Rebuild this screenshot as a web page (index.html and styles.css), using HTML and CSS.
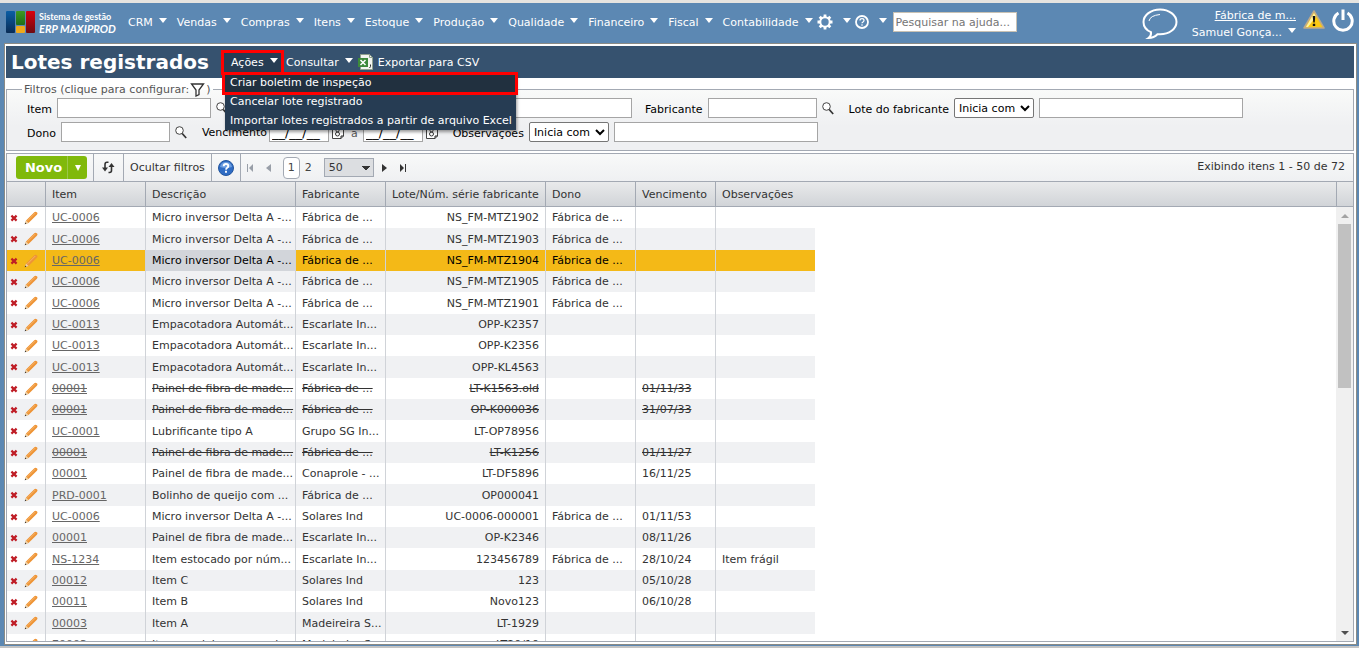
FILE: index.html
```html
<!DOCTYPE html>
<html lang="pt-BR">
  <head>
    <meta charset="UTF-8" />
    <meta name="viewport" content="width=device-width, initial-scale=1.0" />
    <title>Lotes registrados</title>
    <link rel="stylesheet" href="styles.css">
  </head>
  <body>
    <svg class="sprite" aria-hidden="true">
      <symbol id="x" viewBox="0 0 8 8">
        <path d="M1.4 1.6 6.6 6.6M6.6 1.6 1.4 6.6" stroke="#bf1d26" stroke-width="2.2" />
      </symbol>
      <symbol id="pencil" viewBox="0 0 14 14">
        <path d="M1 13 2 9.500 10.300 1.200Q11.500.2 12.800 1.300T12.900 3.800L4.500 12.100Z" fill="#ee9436" />
        <path d="M1 13 2 9.500 4.500 12.100Z" fill="#ecd3ab" />
        <path d="M.7 13.300 1.300 11.600 2.400 12.700Z" fill="#333" />
        <path d="M3.500 9.800 11.300 2" stroke="#f8b468" stroke-width="1" />
      </symbol>
      <symbol id="lens" viewBox="0 0 12 13">
        <circle cx="4.500" cy="4.500" r="3.800" fill="#fff" stroke="#444" />
        <path d="M7.200 7.500 11.200 12" stroke="#333" stroke-width="1.700" />
      </symbol>
      <symbol id="calendar" viewBox="0 0 12 13">
        <path d="M.5.5h11v9.500l-2.500 2.500H.5z" fill="#fff" stroke="#444" />
        <path d="M11.500 10H9v2.500" fill="none" stroke="#222" />
        <circle cx="5.500" cy="4.500" r="1.500" fill="none" stroke="#333" />
        <circle cx="5.500" cy="8" r="2" fill="none" stroke="#333" />
      </symbol>
    </svg>

    <header class="topbar">
      <a href="#" class="logo">
        <svg width="29" height="22" viewBox="0 0 29 22">
          <defs>
            <linearGradient id="blue" x2="0" y2="1"><stop stop-color="#0a5ea5" /><stop offset="1" stop-color="#0a2c55" /></linearGradient>
            <linearGradient id="green" x2="0" y2="1"><stop stop-color="#3d9a20" /><stop offset="1" stop-color="#1f6e18" /></linearGradient>
            <linearGradient id="red" x2="0" y2="1"><stop stop-color="#d8000e" /><stop offset="1" stop-color="#6e0c12" /></linearGradient>
          </defs>
          <rect width="9" height="22" rx="1" fill="url(#blue)" />
          <rect x="10" width="9" height="14" rx="1" fill="url(#green)" />
          <rect x="10" y="15" width="9" height="7" rx="1" fill="#efa91c" />
          <rect x="20" width="9" height="22" rx="1" fill="url(#red)" />
        </svg>
        <span class="logo-text">Sistema de gestão <em>ERP MAXIPROD</em></span>
      </a>
      <nav class="nav">
        <a href="#">CRM</a>
        <a href="#">Vendas</a>
        <a href="#">Compras</a>
        <a href="#">Itens</a>
        <a href="#">Estoque</a>
        <a href="#">Produção</a>
        <a href="#">Qualidade</a>
        <a href="#">Financeiro</a>
        <a href="#">Fiscal</a>
        <a href="#">Contabilidade</a>
        <a href="#" class="nav-icon" aria-label="Configurações">
          <svg width="16" height="16" viewBox="0 0 16 16" fill="none" stroke="#fff">
            <circle cx="8" cy="8" r="4.700" stroke-width="2" />
            <path d="M8 .5V3M8 13v2.500M.5 8H3M13 8h2.500M2.700 2.700l1.800 1.800M11.500 11.500l1.800 1.800M13.300 2.700l-1.800 1.800M4.500 11.500l-1.800 1.800" stroke-width="2.800" />
          </svg>
        </a>
        <a href="#" class="nav-icon" aria-label="Ajuda">
          <svg width="14" height="14" viewBox="0 0 14 14" fill="none" stroke="#fff">
            <circle cx="7" cy="7" r="6" stroke-width="1.800" />
            <path d="M5 5.500Q5 3.700 7 3.700T9 5.400Q9 6.300 8 6.900T7 8.300M7 9.300v1.400" stroke-width="1.200" />
          </svg>
        </a>
      </nav>
      <input type="text" class="help-search" placeholder="Pesquisar na ajuda..." aria-label="Pesquisar na ajuda">
      <div class="user-area">
        <svg class="chat" width="36" height="32" viewBox="0 0 36 32" fill="none" stroke="#fff" stroke-width="2">
          <path d="M9 24.200C4 22 1.500 18 1.500 14 1.500 7 9 1.500 18 1.500S34.500 7 34.500 14 27 26.300 18 26.300L15.500 26.200Q12 30 6.500 30 9.500 28 9 24.200Z" />
          <path d="M7 13Q8 7.500 18 6.500" stroke-width="1" />
        </svg>
        <div class="user">
          <a href="#" class="company">Fábrica de m...</a>
          <a href="#" class="user-name">Samuel Gonça...</a>
        </div>
        <svg width="22" height="19" viewBox="0 0 22 19">
          <path d="M11 1 21 18H1Z" fill="#fbc913" stroke="#bda98a" stroke-width="1.500" stroke-linejoin="round" />
          <path d="M11 3 13 6.500 5 17H3Z" fill="#fff2a0" />
          <path d="M9.700 6h2.600l-.6 6.500h-1.400zM9.800 13.800h2.400v2.300H9.800z" fill="#111" />
        </svg>
        <a href="#" class="power" aria-label="Sair">
          <svg width="22" height="23" viewBox="0 0 22 23" fill="none" stroke="#fff" stroke-width="3">
            <path d="M6.500 4A9.200 9.200 0 1 0 15.500 4M11 .5V11" />
          </svg>
        </a>
      </div>
    </header>

    <main class="frame">
      <div class="titlebar">
        <h1>Lotes registrados</h1>
        <div class="actions">
          <button type="button" class="action open">Ações</button>
          <ul class="menu">
            <li class="current"><a href="#">Criar boletim de inspeção</a></li>
            <li><a href="#">Cancelar lote registrado</a></li>
            <li><a href="#">Importar lotes registrados a partir de arquivo Excel</a></li>
          </ul>
        </div>
        <button type="button" class="action">Consultar</button>
        <button type="button" class="export">
          <svg width="16" height="16" viewBox="0 0 16 16">
            <path d="M2.500.5h9l3 3v12h-12z" fill="#f2f5ef" stroke="#8fa08d" />
            <path d="M11.500.5v3h3" fill="none" stroke="#8fa08d" />
            <rect y="4" width="10" height="9" fill="#3c8a3b" />
            <path d="M2.500 6 7.500 11M7.500 6 2.500 11" stroke="#fff" stroke-width="1.500" />
            <path d="M12.500 10.500v2l-1 1.500" fill="none" stroke="#333" />
          </svg>
          Exportar para CSV
        </button>
      </div>

      <fieldset class="filters">
        <legend>Filtros (clique para configurar:
          <svg width="15" height="14" viewBox="0 0 15 14"><path d="M1.500 1h12L9 7v4.500L6 13V7Z" fill="#fff" stroke="#333" stroke-width="1.300" /></svg>)
        </legend>
        <div class="filter-row">
          <label for="item">Item</label>
          <input type="text" id="item" class="medium">
          <svg class="lens" width="12" height="13"><use href="#lens" /></svg>
          <input type="text" class="wide description" aria-label="Descrição">
          <label for="fabricante">Fabricante</label>
          <input type="text" id="fabricante" class="short">
          <svg class="lens" width="12" height="13"><use href="#lens" /></svg>
          <label for="lote">Lote do fabricante</label>
          <select id="lote-op" aria-label="Condição do lote"><option>Inicia com</option></select>
          <input type="text" id="lote" class="wide">
        </div>
        <div class="filter-row">
          <label for="dono">Dono</label>
          <input type="text" id="dono" class="short">
          <svg class="lens" width="12" height="13"><use href="#lens" /></svg>
          <label for="de" class="date-label">Vencimento</label>
          <input type="text" id="de" class="date" value="__/__/__">
          <svg class="calendar" width="12" height="13"><use href="#calendar" /></svg>
          <label for="ate" class="until">a</label>
          <input type="text" id="ate" class="date" value="__/__/__">
          <svg class="calendar" width="12" height="13"><use href="#calendar" /></svg>
          <label for="obs">Observações</label>
          <select id="obs-op" aria-label="Condição das observações"><option>Inicia com</option></select>
          <input type="text" id="obs" class="wide">
        </div>
      </fieldset>

      <section class="grid">
        <div class="toolbar">
          <div class="tool tool-new">
            <button type="button" class="new">Novo</button><button type="button" class="new-more" aria-label="Mais opções"></button>
          </div>
          <div class="tool tool-refresh">
            <button type="button" class="plain" aria-label="Atualizar">
              <svg width="15" height="13" viewBox="0 0 15 13" fill="none" stroke="#333" stroke-width="1.600">
                <path d="M7.500 1.300H6Q4 1.300 4 3.500V9M10.500 4v5.500q0 2-2 2H7.500" />
                <path d="M1 6.500h6L4 10.500ZM7.500 6h6L10.500 2Z" fill="#333" stroke="none" />
              </svg>
            </button>
          </div>
          <div class="tool"><button type="button" class="plain">Ocultar filtros</button></div>
          <div class="tool">
            <button type="button" class="plain" aria-label="Ajuda">
              <svg width="16" height="16" viewBox="0 0 16 16" fill="none">
                <circle cx="8" cy="8" r="7.500" fill="#2f6cc4" stroke="#24569e" />
                <path d="M2 7Q3 2 8 2T14 7Q8 9 2 7Z" fill="#6c9de0" />
                <path d="M5.700 6.200Q5.700 4 8 4T10.300 6Q10.300 7 9.200 7.700T8 9.600M8 10.800V12.800" stroke="#fff" stroke-width="1.900" />
              </svg>
            </button>
          </div>
          <div class="pager">
            <button type="button" class="plain off" aria-label="Primeira"><svg width="7" height="8"><path d="M0 0h1v8H0zM6 0v8L2 4z" /></svg></button>
            <button type="button" class="plain off" aria-label="Anterior"><svg width="5" height="8"><path d="M5 0v8L0 4z" /></svg></button>
            <a href="#" class="page current">1</a>
            <a href="#" class="page">2</a>
            <select class="page-size" aria-label="Itens por página"><option>50</option></select>
            <button type="button" class="plain" aria-label="Próxima"><svg width="5" height="8"><path d="M0 0v8l5-4z" /></svg></button>
            <button type="button" class="plain" aria-label="Última"><svg width="7" height="8"><path d="M1 0v8l4-4zM6 0h1v8H6z" /></svg></button>
          </div>
          <span class="count">Exibindo itens 1 - 50 de 72</span>
        </div>

        <div class="grid-head">
          <table>
            <colgroup><col class="c-tools"><col class="c-item"><col class="c-desc"><col class="c-fab"><col class="c-lot"><col class="c-fab"><col class="c-date"><col></colgroup>
            <thead>
              <tr><th></th><th>Item</th><th>Descrição</th><th>Fabricante</th><th>Lote/Núm. série fabricante</th><th>Dono</th><th>Vencimento</th><th>Observações</th></tr>
            </thead>
          </table>
        </div>

        <div class="grid-body">
          <div class="rows">
            <table>
              <colgroup><col class="c-tools"><col class="c-item"><col class="c-desc"><col class="c-fab"><col class="c-lot"><col class="c-fab"><col class="c-date"><col class="c-item"></colgroup>
              <tbody>
                <tr><td><svg class="x"><use href="#x" /></svg><svg class="pencil"><use href="#pencil" /></svg></td><td><a href="#">UC-0006</a></td><td>Micro inversor Delta A -...</td><td>Fábrica de ...</td><td>NS_FM-MTZ1902</td><td>Fábrica de ...</td><td></td><td></td></tr>
                <tr><td><svg class="x"><use href="#x" /></svg><svg class="pencil"><use href="#pencil" /></svg></td><td><a href="#">UC-0006</a></td><td>Micro inversor Delta A -...</td><td>Fábrica de ...</td><td>NS_FM-MTZ1903</td><td>Fábrica de ...</td><td></td><td></td></tr>
                <tr class="selected"><td><svg class="x"><use href="#x" /></svg><svg class="pencil"><use href="#pencil" /></svg></td><td><a href="#">UC-0006</a></td><td class="hover">Micro inversor Delta A -...</td><td>Fábrica de ...</td><td>NS_FM-MTZ1904</td><td>Fábrica de ...</td><td></td><td></td></tr>
                <tr><td><svg class="x"><use href="#x" /></svg><svg class="pencil"><use href="#pencil" /></svg></td><td><a href="#">UC-0006</a></td><td>Micro inversor Delta A -...</td><td>Fábrica de ...</td><td>NS_FM-MTZ1905</td><td>Fábrica de ...</td><td></td><td></td></tr>
                <tr><td><svg class="x"><use href="#x" /></svg><svg class="pencil"><use href="#pencil" /></svg></td><td><a href="#">UC-0006</a></td><td>Micro inversor Delta A -...</td><td>Fábrica de ...</td><td>NS_FM-MTZ1901</td><td>Fábrica de ...</td><td></td><td></td></tr>
                <tr><td><svg class="x"><use href="#x" /></svg><svg class="pencil"><use href="#pencil" /></svg></td><td><a href="#">UC-0013</a></td><td>Empacotadora Automát...</td><td>Escarlate In...</td><td>OPP-K2357</td><td></td><td></td><td></td></tr>
                <tr><td><svg class="x"><use href="#x" /></svg><svg class="pencil"><use href="#pencil" /></svg></td><td><a href="#">UC-0013</a></td><td>Empacotadora Automát...</td><td>Escarlate In...</td><td>OPP-K2356</td><td></td><td></td><td></td></tr>
                <tr><td><svg class="x"><use href="#x" /></svg><svg class="pencil"><use href="#pencil" /></svg></td><td><a href="#">UC-0013</a></td><td>Empacotadora Automát...</td><td>Escarlate In...</td><td>OPP-KL4563</td><td></td><td></td><td></td></tr>
                <tr class="canceled"><td><svg class="x"><use href="#x" /></svg><svg class="pencil"><use href="#pencil" /></svg></td><td><a href="#">00001</a></td><td>Painel de fibra de made...</td><td>Fábrica de ...</td><td>LT-K1563.old</td><td></td><td>01/11/33</td><td></td></tr>
                <tr class="canceled"><td><svg class="x"><use href="#x" /></svg><svg class="pencil"><use href="#pencil" /></svg></td><td><a href="#">00001</a></td><td>Painel de fibra de made...</td><td>Fábrica de ...</td><td>OP-K000036</td><td></td><td>31/07/33</td><td></td></tr>
                <tr><td><svg class="x"><use href="#x" /></svg><svg class="pencil"><use href="#pencil" /></svg></td><td><a href="#">UC-0001</a></td><td>Lubrificante tipo A</td><td>Grupo SG In...</td><td>LT-OP78956</td><td></td><td></td><td></td></tr>
                <tr class="canceled"><td><svg class="x"><use href="#x" /></svg><svg class="pencil"><use href="#pencil" /></svg></td><td><a href="#">00001</a></td><td>Painel de fibra de made...</td><td>Fábrica de ...</td><td>LT-K1256</td><td></td><td>01/11/27</td><td></td></tr>
                <tr><td><svg class="x"><use href="#x" /></svg><svg class="pencil"><use href="#pencil" /></svg></td><td><a href="#">00001</a></td><td>Painel de fibra de made...</td><td>Conaprole - ...</td><td>LT-DF5896</td><td></td><td>16/11/25</td><td></td></tr>
                <tr><td><svg class="x"><use href="#x" /></svg><svg class="pencil"><use href="#pencil" /></svg></td><td><a href="#">PRD-0001</a></td><td>Bolinho de queijo com ...</td><td>Fábrica de ...</td><td>OP000041</td><td></td><td></td><td></td></tr>
                <tr><td><svg class="x"><use href="#x" /></svg><svg class="pencil"><use href="#pencil" /></svg></td><td><a href="#">UC-0006</a></td><td>Micro inversor Delta A -...</td><td>Solares Ind</td><td>UC-0006-000001</td><td>Fábrica de ...</td><td>01/11/53</td><td></td></tr>
                <tr><td><svg class="x"><use href="#x" /></svg><svg class="pencil"><use href="#pencil" /></svg></td><td><a href="#">00001</a></td><td>Painel de fibra de made...</td><td>Escarlate In...</td><td>OP-K2346</td><td></td><td>08/11/26</td><td></td></tr>
                <tr><td><svg class="x"><use href="#x" /></svg><svg class="pencil"><use href="#pencil" /></svg></td><td><a href="#">NS-1234</a></td><td>Item estocado por núm...</td><td>Escarlate In...</td><td>123456789</td><td>Fábrica de ...</td><td>28/10/24</td><td>Item frágil</td></tr>
                <tr><td><svg class="x"><use href="#x" /></svg><svg class="pencil"><use href="#pencil" /></svg></td><td><a href="#">00012</a></td><td>Item C</td><td>Solares Ind</td><td>123</td><td></td><td>05/10/28</td><td></td></tr>
                <tr><td><svg class="x"><use href="#x" /></svg><svg class="pencil"><use href="#pencil" /></svg></td><td><a href="#">00011</a></td><td>Item B</td><td>Solares Ind</td><td>Novo123</td><td></td><td>06/10/28</td><td></td></tr>
                <tr><td><svg class="x"><use href="#x" /></svg><svg class="pencil"><use href="#pencil" /></svg></td><td><a href="#">00003</a></td><td>Item A</td><td>Madeireira S...</td><td>LT-1929</td><td></td><td></td><td></td></tr>
                <tr><td><svg class="x"><use href="#x" /></svg><svg class="pencil"><use href="#pencil" /></svg></td><td><a href="#">70003</a></td><td>Item madeira comprad...</td><td>Madeireira S...</td><td>LT20/10</td><td></td><td></td><td></td></tr>
              </tbody>
            </table>
          </div>
          <div class="scrollbar">
            <div class="arrow-up"></div>
            <div class="thumb"></div>
            <div class="arrow-down"></div>
          </div>
        </div>
      </section>
    </main>
  </body>
</html>
```

FILE: styles.css
```css
* {
  margin: 0;
  padding: 0;
  box-sizing: border-box;
}

body {
  height: 100vh;
  display: flex;
  flex-direction: column;
  overflow: hidden;
  padding: 0 2px 0 4px;
  background: #5c88b3;
  border-top: 3px solid #e6e4e0;
  border-bottom: 2px solid #c4c4c4;
  font-family: "DejaVu Sans", Verdana, sans-serif;
  font-size: 11px;
  color: #333;
}

input,
select,
button {
  font: inherit;
  color: inherit;
}

button {
  border: 0;
  background: none;
}

a {
  color: inherit;
}

.sprite {
  position: absolute;
  width: 0;
  height: 0;
}

/* Top bar */
.topbar {
  display: flex;
  height: 40px;
  flex: none;
  color: #fff;
}

.topbar a {
  text-decoration: none;
}

.logo {
  display: flex;
  gap: 4px;
  width: 124px;
  padding: 8px 0 0 2px;
}

.logo-text {
  font: bold 9px/11px Lato, sans-serif;
  white-space: nowrap;
}

.logo-text em {
  display: block;
  font-size: 11px;
  line-height: 13px;
}

.nav {
  display: flex;
  align-items: center;
  gap: 10px;
  height: 38px;
}

.nav a,
.action,
.user-name {
  display: flex;
  align-items: center;
  gap: 6px;
}

.nav a::after,
.action::after,
.user-name::after {
  content: "";
  margin-bottom: 4px;
  border: 4px solid transparent;
  border-top: 5px solid #fff;
  border-bottom: 0;
}

.nav .nav-icon {
  gap: 10px;
  margin-left: -6px;
}

.help-search {
  width: 124px;
  height: 20px;
  margin: 9px 0 0 6px;
  padding: 0 2px;
  border: 1px solid #c9c2b4;
  background: #fff;
}

.help-search::placeholder {
  color: #757575;
}

.user-area {
  display: flex;
  align-items: flex-start;
  gap: 7px;
  margin-left: auto;
  padding: 7px 3px 0 0;
}

.chat {
  margin-right: 7px;
  margin-top: -2px;
}

.user {
  line-height: 17px;
  text-align: right;
  margin-top: -3px;
}

.topbar .company {
  text-decoration: underline;
}

.power {
  margin-top: -1px;
}

/* White frame around the page content */
.frame {
  flex: 1;
  min-height: 0;
  display: flex;
  flex-direction: column;
  padding: 2px 2px 2px 1px;
  margin-bottom: 1px;
  border: 1px solid #8b8b86;
  background: #fff;
}

.titlebar {
  display: flex;
  align-items: center;
  flex: none;
  height: 32px;
  padding-left: 5px;
  background: #36526f;
  color: #fff;
}

.titlebar h1 {
  width: 213px;
  font-size: 20px;
  white-space: nowrap;
}

.actions {
  position: relative;
  margin-right: 2px;
}

.action {
  height: 19px;
  padding-left: 3px;
  margin-right: 5px;
}

.action.open {
  width: 57px;
  padding-left: 7px;
  margin-right: 0;
  background: #263c53;
  outline: 3px solid #f00;
}

.menu {
  position: absolute;
  z-index: 2;
  top: 20px;
  left: 1px;
  width: 291px;
  list-style: none;
  background: #263c53;
  box-shadow: 1px 2px 3px rgba(0, 0, 0, 0.4);
}

.menu a {
  display: block;
  padding-left: 5px;
  line-height: 19px;
  text-decoration: none;
  white-space: nowrap;
}

.menu .current {
  position: relative;
  background: #21303f;
}

.menu .current::after {
  content: "";
  position: absolute;
  inset: -1px -2px -3px -3px;
  border: 3px solid #f00;
}

.export {
  display: flex;
  align-items: center;
  gap: 4px;
}

/* Filters */
.filters {
  flex: none;
  height: 68px;
  margin-top: 5px;
  padding: 0 0 0 20px;
  border: 1px solid #a3a9b3;
  background: linear-gradient(#f9faf9, #eff0f2 60%);
  color: #000;
}

.filters legend {
  display: flex;
  align-items: center;
  gap: 1px;
  height: 13px;
  margin-left: -5px;
  padding: 0 2px;
  color: #555;
}

.filter-row {
  display: flex;
  align-items: center;
  gap: 5px;
  height: 20px;
  margin-top: 2px;
  white-space: nowrap;
}

.filter-row + .filter-row {
  margin-top: 4px;
}

.filter-row label {
  padding-top: 3px;
}

.filter-row input {
  height: 20px;
  padding: 0 2px;
  border: 1px solid #a5a5a5;
  background: #fff;
}

.filter-row select {
  width: 80px;
  height: 20px;
  border: 1px solid #767676;
  border-radius: 2px;
  background: #fff;
}

.filter-row .short {
  width: 109px;
}

.filter-row .medium {
  width: 154px;
}

.filter-row .wide {
  width: 204px;
}

.filter-row .date {
  width: 60px;
  font-size: 13px;
}

.filter-row .description {
  margin-left: 185px;
  margin-right: 8px;
}

.filter-row .lens {
  margin-right: 10px;
}

.filter-row .date-label {
  margin-right: -3px;
  padding: 0;
}

.calendar {
  margin-left: -2px;
}

.calendar + label {
  margin-left: 10px;
}

.calendar + .until {
  margin-left: 2px;
  color: #555;
}

/* Grid */
.grid {
  flex: 1;
  min-height: 0;
  display: flex;
  flex-direction: column;
  margin-top: 2px;
  border: 1px solid #a3a9b3;
}

.toolbar {
  display: flex;
  align-items: center;
  flex: none;
  height: 27px;
  background: linear-gradient(#f8f9f9, #eff0f2);
}

.tool {
  display: flex;
  align-items: center;
  height: 100%;
  padding: 0 6px;
  border-right: 1px solid #a3a9b3;
}

.tool-new {
  padding-left: 9px;
}

.tool-refresh {
  padding: 0 7px;
}

.new,
.new-more {
  height: 23px;
  background: #80b90b;
  color: #fff;
}

.new {
  width: 51px;
  padding-left: 4px;
  border-radius: 3px 0 0 3px;
  font-size: 13px;
  font-weight: bold;
}

.new-more {
  display: flex;
  align-items: center;
  justify-content: center;
  width: 20px;
  border-left: 1px solid #9bc74a;
  border-radius: 0 3px 3px 0;
}

.new-more::after {
  content: "";
  border: 3px solid transparent;
  border-top: 6px solid #fff;
  border-bottom: 0;
}

.plain {
  display: flex;
  fill: #333;
}

.plain.off {
  fill: #999fa8;
}

.pager {
  display: flex;
  align-items: center;
  gap: 12px;
  padding-left: 6px;
}

.page {
  color: #444;
  text-decoration: none;
}

.page.current {
  width: 17px;
  margin-right: -7px;
  border: 1px solid #a3a9b3;
  border-radius: 4px;
  background: #fff;
  line-height: 20px;
  text-align: center;
}

.page-size {
  appearance: none;
  width: 50px;
  height: 19px;
  margin-right: -4px;
  padding-left: 4px;
  border: 1px solid #a3a9b3;
  background:
    conic-gradient(from -45deg at 50% 100%, #333 90deg, transparent 0) 37px 7px / 8px 4px no-repeat,
    #dcdee1;
}

.count {
  margin-left: auto;
  padding: 0 8px 2px 0;
}

table {
  table-layout: fixed;
  border-collapse: separate;
  border-spacing: 0;
}

.c-tools {
  width: 38px;
}

.c-item {
  width: 100px;
}

.c-desc {
  width: 150px;
}

.c-fab {
  width: 90px;
}

.c-lot {
  width: 160px;
}

.c-date {
  width: 80px;
}

.grid-head {
  flex: none;
  padding-right: 16px;
  border: solid #a3a9b3;
  border-width: 1px 0;
  background: linear-gradient(#e9eaeb, #d1d4d8);
}

.grid-head table {
  width: 100%;
  border-right: 1px solid #a3a9b3;
}

th {
  height: 24px;
  padding-left: 6px;
  border-left: 1px solid #a3a9b3;
  font-weight: normal;
  text-align: left;
  white-space: nowrap;
}

th:first-child,
td:first-child {
  border-left: 0;
}

.grid-body {
  flex: 1;
  min-height: 0;
  display: flex;
}

.rows {
  flex: 1;
  overflow: hidden;
}

.rows table {
  width: 808px;
}

td {
  height: 21px;
  padding: 0 6px;
  border-left: 1px solid #d0d3d8;
  white-space: nowrap;
  overflow: hidden;
}

tr:nth-child(3n + 2) td {
  height: 22px;
}

tr:nth-child(even) {
  background: #f0f1f3;
}

td:first-child {
  padding: 0 0 0 3px;
}

td:nth-child(5) {
  text-align: right;
}

td a {
  color: #666;
}

tr.selected {
  background: #f4b917;
  color: #000;
}

.selected .hover {
  background: #d2d5da;
}

.canceled td {
  text-decoration: line-through;
}

.canceled a {
  text-decoration: underline line-through;
}

.x,
.pencil {
  display: inline-block;
  vertical-align: middle;
}

.x {
  width: 8px;
  height: 8px;
  margin-right: 6px;
}

.pencil {
  width: 14px;
  height: 14px;
}

/* Grid scrollbar */
.scrollbar {
  display: flex;
  flex-direction: column;
  align-items: center;
  width: 17px;
  padding: 7px 0 6px;
  background: #f0f0f0;
}

.arrow-up {
  border: 4px solid transparent;
  border-top: 0;
  border-bottom: 4px solid #a3a3a3;
  margin-bottom: 6px;
}

.thumb {
  width: 13px;
  height: 39%;
  background: #c1c1c1;
}

.arrow-down {
  margin-top: auto;
  border: 4px solid transparent;
  border-top: 4px solid #505050;
  border-bottom: 0;
}
```
